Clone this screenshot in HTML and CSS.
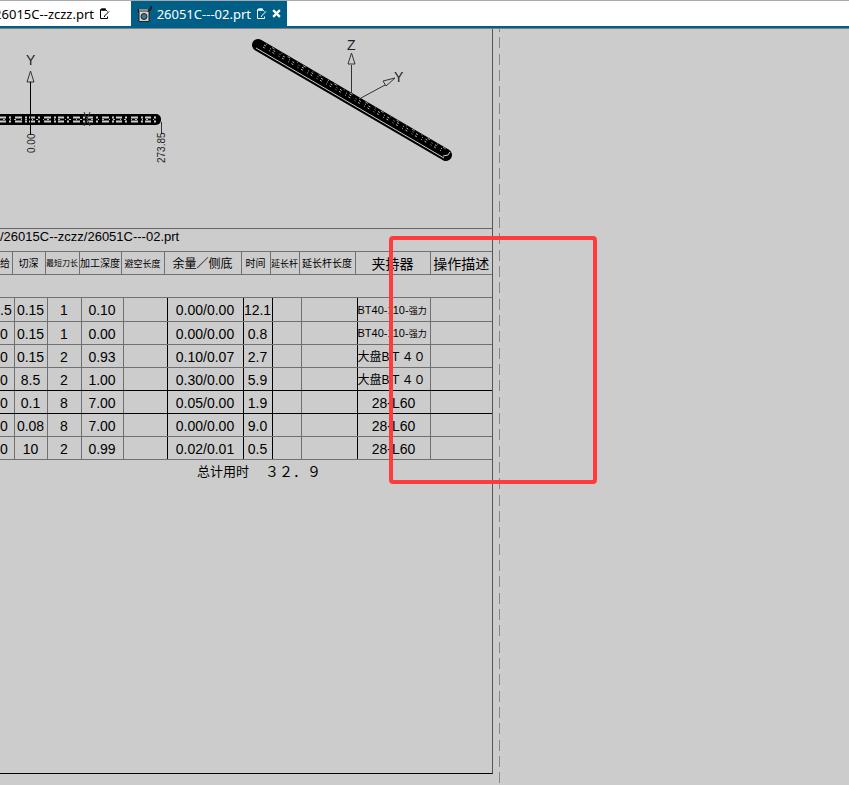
FILE: index.html
```html
<!DOCTYPE html>
<html lang="zh-CN">
<head>
    <meta charset="UTF-8">
    <meta name="viewport" content="width=device-width, initial-scale=1.0">
    <title>26051C---02.prt</title>
    <link rel="stylesheet" href="styles.css">
</head>
<body>
    <nav class="tabs">
        <div class="tab">
            <a class="tab-name" href="#first">26015C--zczz.prt</a>
            <svg class="edit-icon" viewBox="0 0 11 12"><path d="M7 1.5H1.5v9h7V8.500M2.500 .8h4v1.500h-4zM7 2l1.500 1.500M5.500 8l4.500-4.500M5 8.500h1"/></svg>
        </div>
        <div class="tab active">
            <svg class="part-icon" viewBox="0 0 15 16">
                <path d="M1 3.500h10v2h1v10H2v-10H1z" fill="#d9d0c8" stroke="#222"/>
                <path d="M1 4.500h11l2-2V0" fill="none" stroke="#222" stroke-width="2"/>
                <path d="M2 4h9" stroke="#eee"/>
                <circle cx="7" cy="10.500" r="3" fill="#2f7a9c" stroke="#222"/>
            </svg>
            <a class="tab-name" href="#sheet">26051C---02.prt</a>
            <svg class="edit-icon" viewBox="0 0 11 12"><path d="M7 1.5H1.5v9h7V8.500M2.500 .8h4v1.500h-4zM7 2l1.500 1.500M5.500 8l4.500-4.500M5 8.500h1"/></svg>
            <button class="close" aria-label="关闭"><svg viewBox="0 0 8 8"><path d="M1 1l6 6M7 1L1 7"/></svg></button>
        </div>
    </nav>

    <main class="canvas">
        <section class="sheet" id="sheet">
            <svg class="views" viewBox="0 0 492 199">
                <!-- front view -->
                <path class="thin" d="M27 53l3.500-11L34 53z"/>
                <text class="dim axis" x="26" y="36">Y</text>
                <rect x="-5" y="85" width="166" height="11" rx="5" fill="#000"/>
                <path class="mesh" d="M0 88.500h157M0 92.500h157"/>
                <path class="mesh2" d="M3 90.500h152"/>
                <path class="thin" d="M84 83l6 14M90 83l-6 14M161.500 93v12"/>
                <path class="line" d="M30.500 106V53"/>
                <text class="dim" transform="translate(35 124) rotate(-90)">0.00</text>
                <text class="dim" transform="translate(165 134) rotate(-90)">273.85</text>
                <!-- isometric view -->
                <path d="M258 16L446 126" stroke="#000" stroke-width="12" stroke-linecap="round"/>
                <path class="mesh2" d="M264 16L444 121M263 18L443 123"/>
                <path class="mesh3" d="M266 15L446 120"/>
                <path d="M256 19L444 129" stroke="#ccc"/>
                <path d="M443 127l5-1 2-3" stroke="#ccc"/>
                <path class="thin" d="M351.500 64V36M348 35l3.500-11L355 35zM361 69l24-13M395 49l-12 3 3 5z"/>
                <text class="dim axis" x="347" y="21">Z</text>
                <text class="dim axis" x="394" y="53">Y</text>
            </svg>

            <p class="path">/26015C--zczz/26051C---02.prt</p>

            <table class="grid head">
                <colgroup>
                    <col class="h0"><col class="h1"><col class="h2"><col class="h3"><col class="h4"><col class="h5">
                    <col class="h6"><col class="h7"><col class="h8"><col class="h9"><col class="h10">
                </colgroup>
                <tr>
                    <th class="cut">给</th><th>切深</th><th class="xs">最短刀长</th><th>加工深度</th><th class="sm">避空长度</th>
                    <th class="md">余量／侧底</th><th>时间</th><th class="sm">延长杆</th><th>延长杆长度</th>
                    <th class="lg">夹持器</th><th class="lg">操作描述</th>
                </tr>
                <tr><td colspan="11"></td></tr>
            </table>

            <table class="grid rows">
                <colgroup>
                    <col class="d0"><col class="d1"><col class="d2"><col class="d3"><col class="d4"><col class="d5">
                    <col class="d6"><col class="d7"><col class="d8"><col class="d9"><col class="d10">
                </colgroup>
                <tr><td class="cut">.5</td><td>0.15</td><td>1</td><td>0.10</td><td></td><td>0.00/0.00</td><td>12.1</td><td></td><td></td><td class="holder">BT40-110-<span class="sm">强力</span></td><td></td></tr>
                <tr><td class="cut">0</td><td>0.15</td><td>1</td><td>0.00</td><td></td><td>0.00/0.00</td><td>0.8</td><td></td><td></td><td class="holder">BT40-110-<span class="sm">强力</span></td><td></td></tr>
                <tr><td class="cut">0</td><td>0.15</td><td>2</td><td>0.93</td><td></td><td>0.10/0.07</td><td>2.7</td><td></td><td></td><td class="holder wide">大盘BＴ４０</td><td></td></tr>
                <tr class="dark"><td class="cut">0</td><td>8.5</td><td>2</td><td>1.00</td><td></td><td>0.30/0.00</td><td>5.9</td><td></td><td></td><td class="holder wide">大盘BＴ４０</td><td></td></tr>
                <tr class="dark"><td class="cut">0</td><td>0.1</td><td>8</td><td>7.00</td><td></td><td>0.05/0.00</td><td>1.9</td><td></td><td></td><td>28-L60</td><td></td></tr>
                <tr><td class="cut">0</td><td>0.08</td><td>8</td><td>7.00</td><td></td><td>0.00/0.00</td><td>9.0</td><td></td><td></td><td>28-L60</td><td></td></tr>
                <tr><td class="cut">0</td><td>10</td><td>2</td><td>0.99</td><td></td><td>0.02/0.01</td><td>0.5</td><td></td><td></td><td>28-L60</td><td></td></tr>
            </table>

            <p class="total"><span>总计用时</span><span class="sum">３２．９</span></p>
        </section>
        <div class="margin-line"></div>
        <div class="marker"></div>
    </main>
</body>
</html>
```

FILE: styles.css
```css
* {
    box-sizing: border-box;
}
body {
    margin: 0;
    min-height: 100vh;
    display: flex;
    flex-direction: column;
    background-color: #ccc;
    color: #000;
    font-family: "Liberation Sans", "Noto Sans CJK SC", sans-serif;
}
.tabs {
    display: flex;
    height: 29px;
    padding-bottom: 2px;
    background-color: #fff;
    border-top: 1px solid #aaa;
    border-bottom: 1px solid #808080;
    box-shadow: inset 0 -2px #005f87;
    font: 13px "Noto Sans", sans-serif;
}
.tab {
    display: flex;
    align-items: center;
    justify-content: flex-end;
    gap: 5px;
    width: 131px;
    padding-right: 21px;
}
.tab.active {
    width: 156px;
    padding: 0 6px;
    background-color: #005f87;
    color: #fff;
}
.tab-name {
    color: inherit;
    text-decoration: none;
    white-space: nowrap;
}
.edit-icon {
    flex: none;
    width: 11px;
    height: 12px;
    fill: none;
    stroke: currentColor;
}
.part-icon {
    flex: none;
    width: 15px;
    height: 16px;
}
.close {
    display: flex;
    padding: 0;
    border: none;
    background: none;
    color: #fff;
}
.close svg {
    width: 9px;
    height: 9px;
    stroke: currentColor;
    stroke-width: 2;
}
.canvas {
    position: relative;
    flex: 1;
    display: grid;
    grid-template-columns: 493fr 356fr;
}
.sheet {
    margin-bottom: 11px;
    border-right: 1px solid #555;
    border-bottom: 1px solid #000;
    overflow: hidden;
}
.views {
    display: block;
    width: 100%;
    fill: none;
}
.line {
    stroke: #000;
}
.thin {
    stroke: #333;
}
.mesh {
    stroke: #ccc;
    stroke-width: 2;
    stroke-dasharray: 6 3 2 4 7 3 2 2;
}
.mesh2 {
    stroke: #bbb;
    stroke-dasharray: 2 5 1 3;
}
.mesh3 {
    stroke: #999;
    stroke-dasharray: 1 6 3 8;
}
.dim {
    font-size: 10px;
    fill: #222;
}
.axis {
    font-size: 14px;
}
.path {
    margin: 0;
    height: 23px;
    border-top: 1px solid #666;
    font-size: 13px;
    line-height: 16px;
    white-space: nowrap;
}
.grid {
    width: 100%;
    table-layout: fixed;
    border-collapse: collapse;
    white-space: nowrap;
}
.grid th,
.grid td {
    height: 23px;
    padding: 2px 0 0;
    border: 1px solid #707070;
    border-left: none;
    font-weight: normal;
    line-height: 16px;
    text-align: center;
}
.grid th:last-child,
.grid td:last-child {
    border-right: none;
}
.head th {
    font-size: 10px;
}
.rows td {
    font-size: 14px;
}
.rows tr:first-child td {
    border-top: none;
}
.rows .dark td {
    border-bottom-color: #000;
}
.rows td:nth-child(6),
.rows td:nth-child(7),
.rows td:nth-child(9),
.rows td:nth-child(5) {
    border-right-color: #000;
}
.grid .cut {
    overflow: hidden;
    text-align: left;
}
.grid .xs {
    font-size: 8px;
}
.grid .sm {
    font-size: 9px;
}
.grid .md {
    font-size: 12px;
}
.grid .lg {
    font-size: 14px;
}
.grid .holder {
    font-size: 11px;
    text-align: left;
}
.grid .wide {
    font-size: 12px;
}
.h0 { width: 12px; }
.h1 { width: 33px; }
.h2 { width: 34px; }
.h3 { width: 42px; }
.h4 { width: 43px; }
.h5 { width: 77px; }
.h6 { width: 29px; }
.h7 { width: 29px; }
.h8 { width: 56px; }
.h9 { width: 75px; }
.h10 { width: 62px; }
.d0 { width: 14px; }
.d1 { width: 33px; }
.d2 { width: 34px; }
.d3 { width: 42px; }
.d4 { width: 44px; }
.d5 { width: 76px; }
.d6 { width: 29px; }
.d7 { width: 29px; }
.d8 { width: 56px; }
.d9 { width: 73px; }
.d10 { width: 62px; }
.total {
    display: flex;
    gap: 16px;
    margin: 0;
    padding: 3px 0 0 197px;
    font-size: 13px;
    line-height: 18px;
}
.sum {
    font-size: 14px;
}
.margin-line {
    width: 1px;
    margin-left: 6px;
    background: repeating-linear-gradient(#888 0 3px, transparent 3px 8px, #888 8px 19px, transparent 19px 25px, #888 25px 36px, transparent 36px 41px, #888 41px 49px);
}
.marker {
    position: absolute;
    left: 389px;
    top: 207px;
    width: 208px;
    height: 248px;
    border: 4px solid #ff3b3b;
    border-radius: 4px;
}
```
